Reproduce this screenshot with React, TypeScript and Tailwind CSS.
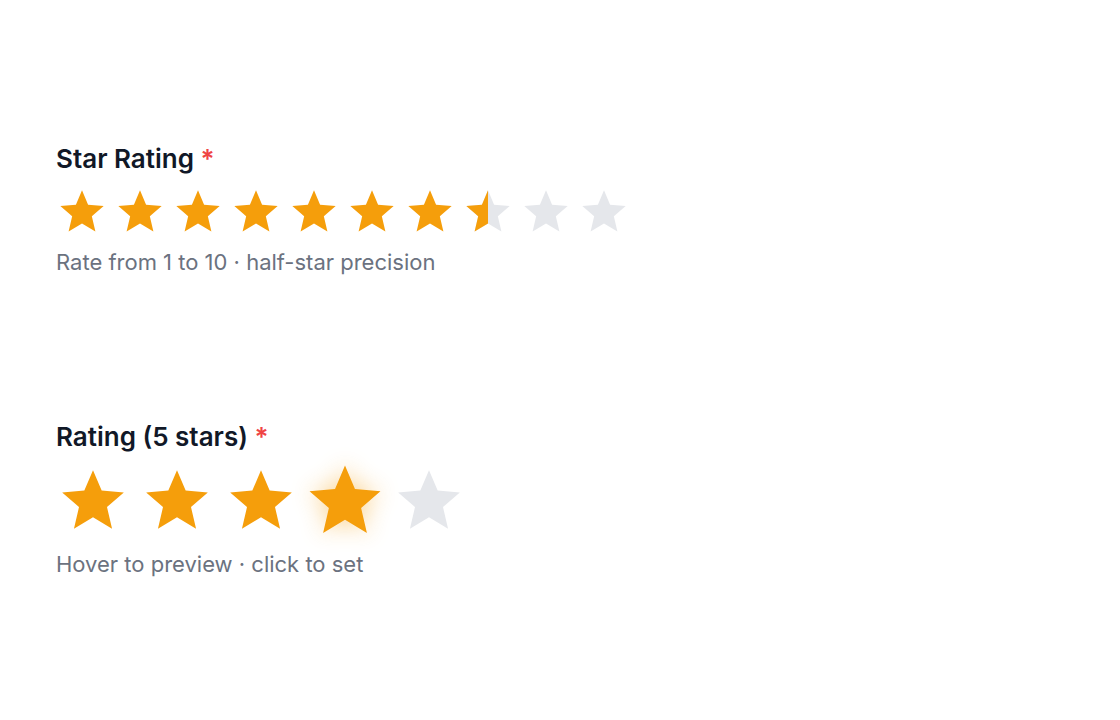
import { useState } from "react";

const STAR_PATH =
  "M12 17.27L18.18 21l-1.64-7.03L22 9.24l-7.19-.61L12 2 9.19 8.63 2 9.24l5.46 4.73L5.82 21z";

function Star({
  fill,
  size,
  glow = false
}: {
  fill: "full" | "half" | "empty";
  size: number;
  glow?: boolean;
}) {
  return (
    <svg
      width={size}
      height={size}
      viewBox="0 0 24 24"
      className={
        glow
          ? "scale-115 drop-shadow-[0_0_10px_rgba(245,158,11,0.45)] transition"
          : "transition"
      }
    >
      <defs>
        <clipPath id="half-left">
          <rect x="0" y="0" width="12" height="24" />
        </clipPath>
      </defs>
      <path d={STAR_PATH} fill={fill === "full" ? "#f59e0b" : "#e5e7eb"} />
      {fill === "half" ? (
        <path d={STAR_PATH} fill="#f59e0b" clipPath="url(#half-left)" />
      ) : null}
    </svg>
  );
}

function Label({ children }: { children: React.ReactNode }) {
  return (
    <p className="text-[26px] leading-8 font-semibold text-[#111827]">
      {children} <span className="text-[#ef4444]">*</span>
    </p>
  );
}

export default function App() {
  const [value] = useState(7.5);
  const [hover] = useState(4);

  return (
    <div
      className="min-h-screen bg-white pl-[56px] pt-[143px]"
      style={{ fontFamily: "Inter, 'Noto Sans', sans-serif" }}
    >
      <div>
        <Label>Star Rating</Label>
        <div className="mt-[11px] flex gap-[6px]">
          {Array.from({ length: 10 }).map((_, i) => {
            const fill =
              value >= i + 1 ? "full" : value >= i + 0.5 ? "half" : "empty";
            return (
              <button key={i} type="button" className="block">
                <Star fill={fill} size={52} />
              </button>
            );
          })}
        </div>
        <p className="mt-[10px] text-[22px] leading-7 text-[#6b7280]">
          Rate from 1 to 10 · half-star precision
        </p>
      </div>

      <div className="mt-[145px]">
        <Label>Rating (5 stars)</Label>
        <div className="mt-[11px] flex gap-[10px]">
          {Array.from({ length: 5 }).map((_, i) => (
            <button key={i} type="button" className="block">
              <Star
                fill={hover >= i + 1 ? "full" : "empty"}
                size={74}
                glow={hover === i + 1}
              />
            </button>
          ))}
        </div>
        <p className="mt-[12px] text-[22px] leading-7 text-[#6b7280]">
          Hover to preview · click to set
        </p>
      </div>
    </div>
  );
}
